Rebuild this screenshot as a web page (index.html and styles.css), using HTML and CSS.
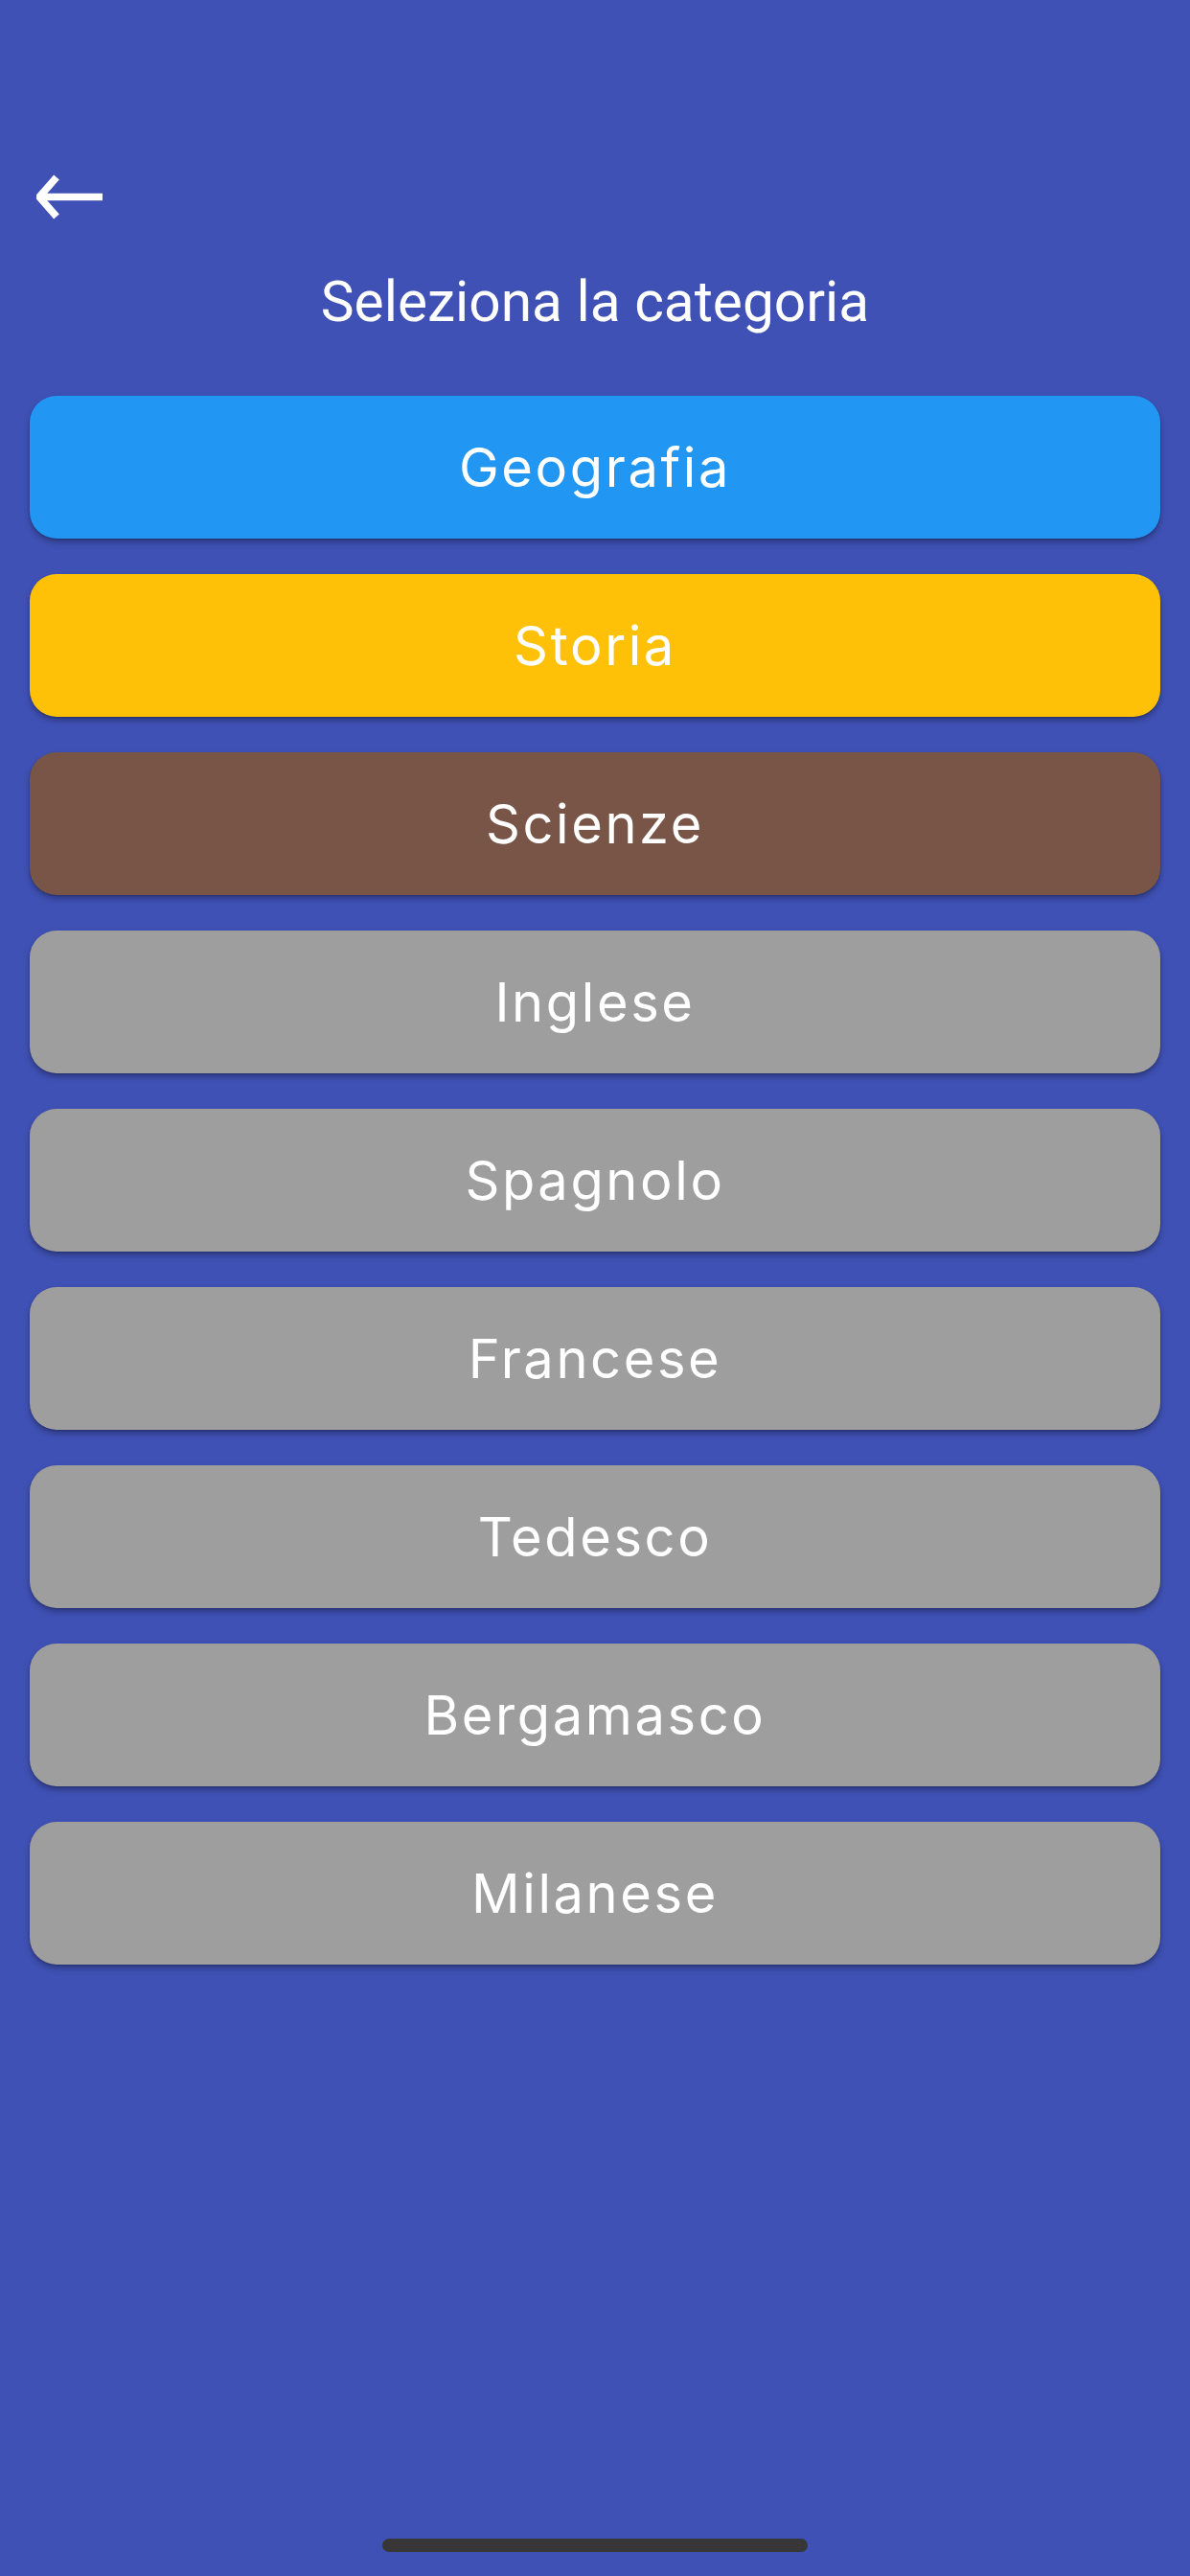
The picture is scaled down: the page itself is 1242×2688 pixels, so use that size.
FILE: index.html
```html
<!DOCTYPE html>
<html>
<head>
<meta charset="utf-8">
<link rel="stylesheet" href="styles.css">
</head>
<body>
<div class="screen">
  <div class="topbar">
    <svg class="back" width="72" height="48" viewBox="0 0 72 48">
      <polyline points="21,3 3,23.5 21,44" fill="none" stroke="#ffffff" stroke-width="7.5" stroke-linejoin="miter"/>
      <line x1="4" y1="23.5" x2="69" y2="23.5" stroke="#ffffff" stroke-width="7.5"/>
    </svg>
  </div>

  <h1 class="title">Seleziona la categoria</h1>

  <div class="list">
    <div class="cat blue">Geografia</div>
    <div class="cat amber">Storia</div>
    <div class="cat brown">Scienze</div>
    <div class="cat grey">Inglese</div>
    <div class="cat grey">Spagnolo</div>
    <div class="cat grey">Francese</div>
    <div class="cat grey">Tedesco</div>
    <div class="cat grey">Bergamasco</div>
    <div class="cat grey">Milanese</div>
  </div>

  <div class="home-bar"></div>
</div>
</body>
</html>
```

FILE: styles.css
```css
body {
  margin: 0;
  background-color: #3f51b5;
  color: #ffffff;
}

.screen {
  height: 2688px;
  display: flex;
  flex-direction: column;
}

.topbar {
  padding-top: 182px;
  padding-left: 38px;
}

.back {
  display: block;
}

.title {
  margin: 50px 0 0 0;
  font-family: Roboto, "Liberation Sans", sans-serif;
  font-weight: 400;
  font-size: 58.6px;
  line-height: 70px;
  text-align: center;
}

.list {
  margin-top: 63px;
  padding: 0 31px;
  display: flex;
  flex-direction: column;
  gap: 37px;
}

.cat {
  height: 149px;
  border-radius: 28px;
  display: flex;
  align-items: center;
  justify-content: center;
  font-family: Inter, "Noto Sans", sans-serif;
  font-size: 56px;
  letter-spacing: 2.6px;
  box-shadow: 0 4px 6px rgba(0, 0, 0, 0.28), 0 1px 2px rgba(0, 0, 0, 0.2);
}

/* category colours */
.blue {
  background-color: #2196f3;
}
.amber {
  background-color: #ffc107;
}
.brown {
  background-color: #795548;
}
.grey {
  background-color: #9e9e9e;
}

.home-bar {
  margin: auto auto 25px auto;
  width: 444px;
  height: 14px;
  border-radius: 7px;
  background-color: #373737;
}
```
